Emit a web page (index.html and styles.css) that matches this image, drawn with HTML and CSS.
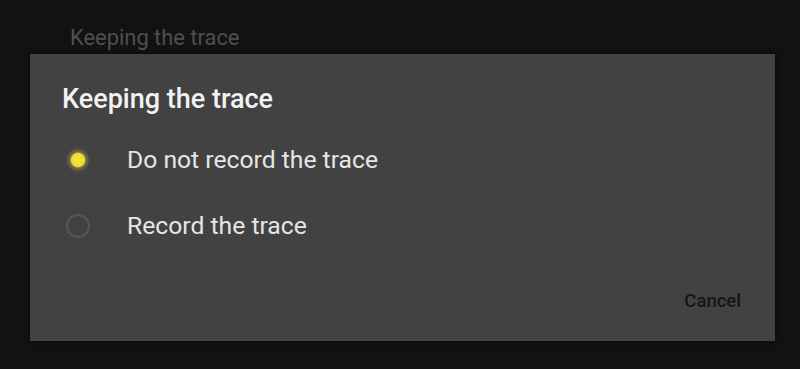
FILE: index.html
```html
<!DOCTYPE html>
<html lang="en">
<head>
    <meta charset="UTF-8">
    <meta name="viewport" content="width=device-width, initial-scale=1.0">
    <title>Keeping the trace</title>
    <link rel="stylesheet" href="styles.css">
</head>
<body>
    <div class="behind">Keeping the trace</div>

    <div class="dialog">
        <h2 class="dialog-title">Keeping the trace</h2>
        <div class="options">
            <label class="option">
                <span class="radio checked"></span>
                <span class="option-text">Do not record the trace</span>
            </label>
            <label class="option">
                <span class="radio"></span>
                <span class="option-text">Record the trace</span>
            </label>
        </div>
        <div class="actions">
            <button class="btn-cancel">Cancel</button>
        </div>
    </div>
</body>
</html>
```

FILE: styles.css
```css
* {
    margin: 0;
    padding: 0;
    box-sizing: border-box;
}

body {
    font-family: Roboto, 'Noto Sans', sans-serif;
    background: #121212;
    width: 800px;
    height: 369px;
    overflow: hidden;
}

.behind {
    padding: 25px 0 0 70px;
    height: 54px;
    font-size: 21.9px;
    line-height: 26px;
    color: #4f4f4f;
}

.dialog {
    margin-left: 30px;
    width: 745px;
    height: 287px;
    background: #424242;
    box-shadow: 0 0 4px rgba(0, 0, 0, 0.6);
    padding: 30px 34px 0 32px;
    display: flex;
    flex-direction: column;
}

.dialog-title {
    font-size: 27px;
    font-weight: 500;
    color: #f2f2f2;
    line-height: 30px;
}

.options {
    margin-top: 20px;
    display: flex;
    flex-direction: column;
}

.option {
    display: flex;
    align-items: center;
    height: 66px;
    margin-top: -7px;
}

.option + .option {
    margin-top: 0;
}

.radio {
    width: 24px;
    height: 24px;
    margin-left: 4px;
    border-radius: 50%;
    border: 2px solid #565656;
    flex-shrink: 0;
}

.radio.checked {
    border: none;
    background: radial-gradient(circle, #f8e23c 0, #f2d938 6.5px, rgba(170, 158, 70, 0.5) 8px, rgba(95, 95, 85, 0.4) 11px, rgba(66, 66, 66, 0) 13px);
}

.option-text {
    margin-left: 37px;
    font-size: 24.7px;
    line-height: 30px;
    color: #e6e6e6;
}

.actions {
    margin-top: auto;
    margin-bottom: 28px;
    display: flex;
    justify-content: flex-end;
}

.btn-cancel {
    background: none;
    border: none;
    font-family: Roboto, 'Noto Sans', sans-serif;
    font-size: 18.5px;
    font-weight: 500;
    line-height: 24px;
    color: #151515;
    cursor: pointer;
}
```
